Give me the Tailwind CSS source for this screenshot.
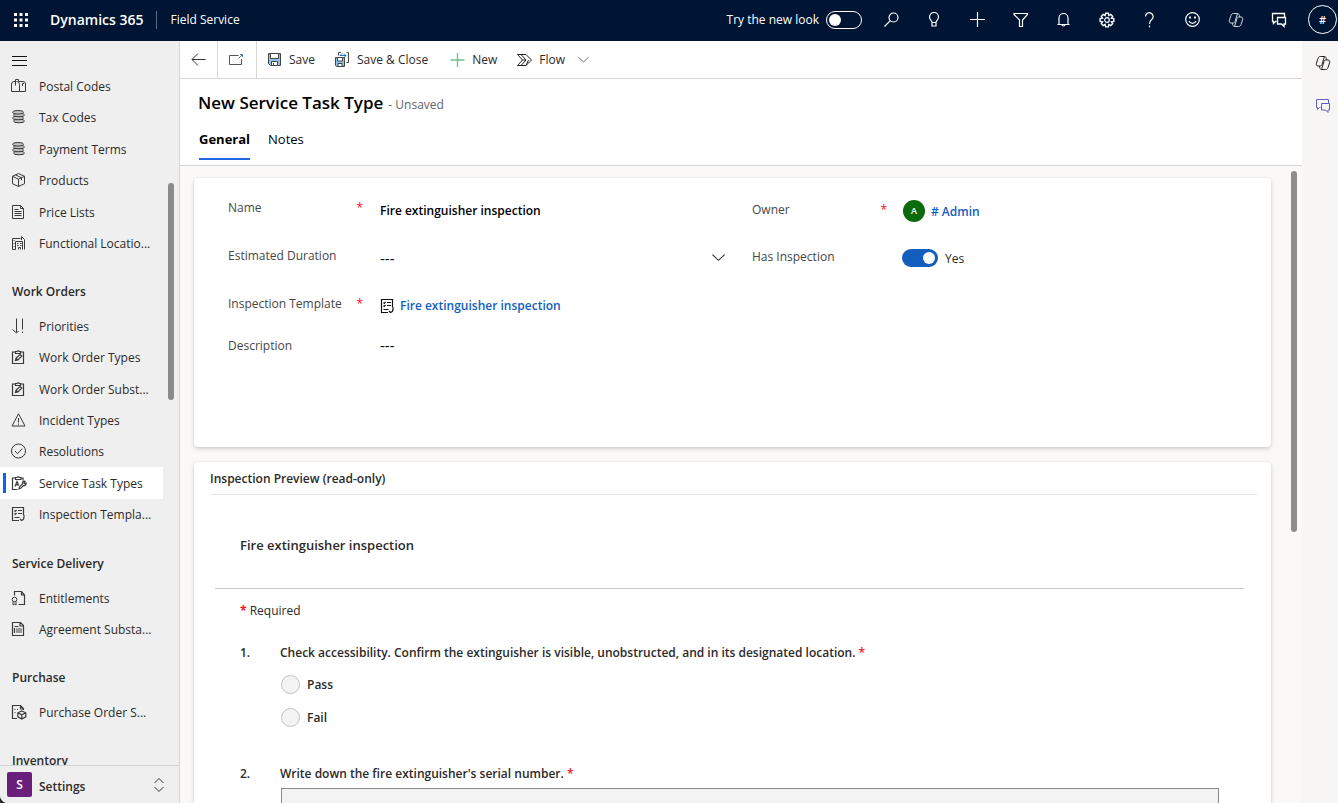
<!DOCTYPE html>
<html lang="en">
<head>
<meta charset="utf-8">
<meta name="viewport" content="width=device-width, initial-scale=1">
<title>New Service Task Type - Dynamics 365</title>
<script src="https://cdn.jsdelivr.net/npm/@tailwindcss/browser@4"></script>
</head>
<body class="bg-[#2b2b2b] font-['Open_Sans','Noto_Sans',sans-serif] text-[12px] leading-5 text-[#2b2a29]">

<svg class="hidden" aria-hidden="true">
  <symbol id="mailbox" viewBox="0 0 16 16"><path d="M8.500 13.500h-8V6A2.500 2.500 0 0 1 3 3.500h2.500M4.500 7.500v-6h3v2h4.500a2.500 2.500 0 0 1 2.500 2.500v7.500h-6V6.500A3 3 0 0 0 6 3.500M11.500 8V5.500H13"/></symbol>
  <symbol id="coins" viewBox="0 0 16 16"><g fill="#c4c4c4"><ellipse cx="8" cy="12" rx="5.500" ry="1.800"/><ellipse cx="7" cy="9" rx="5.500" ry="1.800"/><ellipse cx="8" cy="6" rx="5.500" ry="1.800"/><ellipse cx="7" cy="3.300" rx="5.500" ry="1.800"/></g></symbol>
  <symbol id="box" viewBox="0 0 16 16"><path d="M7.500 1.500 13.500 4.300v7.400L7.500 14.500 1.500 11.700V4.300zM1.500 4.300l6 2.900 6-2.900M7.500 7.200v7.300M4.500 2.900l6 2.900v2.400"/></symbol>
  <symbol id="page" viewBox="0 0 16 16"><path d="M1.500 1.500H9.500L12.500 4.500v10h-11zM9.500 1.500V4.500h3M3.500 5.500h4M3.500 7.500h7M3.500 9.500h7M3.500 11.500h7"/></symbol>
  <symbol id="buildings" viewBox="0 0 16 16"><path d="M9.500 3.500h-8v11h3M10.500 5V1.500l3 3v10M4.500 14.500v-8h7v8M2.500 5.500h1M2.500 8.500h1M2.500 11.500h1M6 8.500h1.500M9 8.500h1.500M6 10.500h1.500M9 10.500h1.500M7.500 14.500v-2h2v2"/></symbol>
  <symbol id="priority" viewBox="0 0 16 16"><path d="M5.500 .5v14M1.500 11.500l4 3.500 2-2M11.500 .5v11M11.500 13.500v1.500"/></symbol>
  <symbol id="clip" viewBox="0 0 16 16"><path stroke-width="1.200" d="M4.500 3h-3v11.500h11V3h-3M4.500 2.500H6a1.300 1.300 0 0 1 2.300 0h1.200v2h-5zM4.500 11.500l.6-2.500 4-3.500 1.800 1.500-4 4zM5 9.200l1.700 1.700"/></symbol>
  <symbol id="warn" viewBox="0 0 16 16"><path d="M7.500 1.800 14 14H1zM7.500 6v4.500M7.500 11.500v1.200"/></symbol>
  <symbol id="check" viewBox="0 0 16 16"><circle cx="7.500" cy="8" r="7"/><path d="m4 8 2.500 2.700 4.700-5"/></symbol>
  <symbol id="tasks" viewBox="0 0 16 16"><path stroke-width="1.200" d="M4.500 3h-3v11.500h5M10 3h2v2.500M4.500 2.500H6a1.500 1.500 0 0 1 2.500 0H10v2H4.500zM4 11.500l2-5 1.700 4M4.700 9.800h2.500M8 13.800l.5-2 3-3a2 2 0 0 1 2.500-2.500l-1 1.700 1 .8 1-.8a2 2 0 0 1-2.500 2.500l-2.800 2.800z"/></symbol>
  <symbol id="checklist" viewBox="0 0 16 16"><path stroke-width="1.200" d="M12.500 9V1.500h-11v13H8M3.500 4.500l.8.800L5.500 4M7 4.500h4M3.500 7.500l.8.800L5.500 7M7 7.500h4M3.500 11.500h5M9 13l1.500 1.500c2-.5 2.500-1.500 2.500-3.500V9"/></symbol>
  <symbol id="cert" viewBox="0 0 16 16"><path stroke-width="1.200" d="M3.500 5.500v-4h7L13.500 5v9.500H7.500M10.500 1.500V5H13.500"/><circle cx="3.500" cy="9.500" r="2.300"/><path d="M2 11.500v3.500l1.500-1L5 15v-3.500"/></symbol>
  <symbol id="pagefill" viewBox="0 0 16 16"><path stroke-width="1.200" d="M1.500 1.500h8L12.500 4.500v10h-11zM9 1.500V5h3.500M3.500 5.500h4M3.500 7v5"/><path fill="#999" stroke="#999" d="M5.500 7.500h5v4h-5z"/></symbol>
  <symbol id="order" viewBox="0 0 16 16"><path stroke-width="1.200" d="M6 14.500H1.500v-13h8l3 3v1.500M9.500 1.500V5h3M3.500 5.500h1M6 5.500h1M3.500 8.500h1M10.800 7l4 1.800v4L10.800 15l-4-2.200v-4zM6.800 8.800l4 2 4-2M10.800 10.800V15"/></symbol>
  <symbol id="copilot" viewBox="0 0 16 16"><path d="M5.500 1.500h4L7 9.500C6.600 10.800 6 11 5 11H3C1.300 11 1 9.500 1.400 8.200L3 3.500C3.400 2.200 4 1.500 5.500 1.500zM10.500 14.500h-4L9 6.500C9.400 5.200 10 5 11 5h2c1.700 0 2 1.500 1.600 2.800L13 12.500c-.4 1.300-1 2-2.500 2zM9.500 1.500c1.300 0 1.500 1 2.300 3.500M6.500 14.500c-1.300 0-1.500-1-2.300-3.500"/></symbol>
  <symbol id="chat" viewBox="0 0 16 16"><path d="M5.500 9.500H4.500L2.500 11.500V9.500H1.500v-8h12v4M6.500 5.500h8v6.500h-1.500v2.500l-2.500-2.500H6.500z"/></symbol>
  <symbol id="floppy" viewBox="0 0 16 16"><path fill="#8fc0ea" d="M1.500 1.500h12v12h-10l-2-2z"/><path fill="#fff" d="M3.500 1.500h8v5h-8z"/><path fill="#fff" d="M4.500 9.500h6v4h-6z"/><path d="M6.500 11v2.500"/></symbol>
  <symbol id="chev" viewBox="0 0 16 16"><path d="m1.500 5 6.500 6 6.500-6"/></symbol>
</svg>

<div class="flex h-screen flex-col overflow-hidden rounded-bl-lg bg-white">
  <header class="flex h-[41px] shrink-0 items-center bg-[#001433] pb-0.5 text-white">
    <button class="ml-[13px] grid size-4 place-items-center" aria-label="App launcher">
      <svg class="size-4" viewBox="0 0 16 16" fill="#fff"><path d="M1 1h3v3H1zM6.500 1h3v3h-3zM12 1h3v3h-3zM1 6.500h3v3H1zM6.500 6.500h3v3h-3zM12 6.500h3v3h-3zM1 12h3v3H1zM6.500 12h3v3h-3zM12 12h3v3h-3z"/></svg>
    </button>
    <a href="#" class="ml-[21px] text-[14px] font-semibold">Dynamics 365</a>
    <span class="mx-[13px] h-[18px] w-px bg-[#5a6880]"></span>
    <a href="#">Field Service</a>
    <div class="ml-auto flex items-center">
      <label for="look">Try the new look</label>
      <input id="look" type="checkbox" role="switch" class="ml-[7px] flex h-[18px] w-9 appearance-none items-center rounded-full border border-white px-0.5 before:size-3 before:rounded-full before:bg-white">
    </div>
    <nav class="ml-[22px] flex items-center gap-[27px]" aria-label="Tools">
      <button aria-label="Search"><svg class="size-4" viewBox="0 0 16 16" fill="none" stroke="#fff" stroke-width="1.200"><circle cx="9.500" cy="5.500" r="4.500"/><path d="M6.300 8.700.5 14.500"/></svg></button>
      <button aria-label="Ideas"><svg class="size-4" viewBox="0 0 16 16" fill="none" stroke="#fff" stroke-width="1.200"><path d="M5 10.500C5 8.500 2.500 8 2.500 5a4.500 4.500 0 0 1 9 0c0 3-2.500 3.500-2.500 5.500zM5 10.500V14h4v-3.500"/></svg></button>
      <button aria-label="Add"><svg class="size-4" viewBox="0 0 16 16" fill="none" stroke="#fff" stroke-width="1.200"><path d="M7.500 0v15M0 7.500h15"/></svg></button>
      <button aria-label="Filter"><svg class="size-4" viewBox="0 0 16 16" fill="none" stroke="#fff" stroke-width="1.200"><path d="M1 1.500h13.500v1L9.500 8v6.500h-3V8L1 2.500z"/></svg></button>
      <button aria-label="Notifications"><svg class="size-4" viewBox="0 0 16 16" fill="none" stroke="#fff" stroke-width="1.200"><path d="M1.500 12.500h12M3 12.500V6a4.500 4.500 0 0 1 9 0v6.500M6 12.500a1.500 1.500 0 0 0 3 0"/></svg></button>
      <button aria-label="Settings"><svg class="size-4" viewBox="0 0 16 16" fill="none" stroke="#fff" stroke-width="1.200"><path d="M6.800 1.200h2.400l.4 2 1.700-1.100 1.700 1.700-1.100 1.700 2.100.4v2.400l-2.100.4 1.100 1.700-1.700 1.700-1.700-1.100-.4 2.100H6.800l-.4-2.100-1.700 1.100L3 10.400l1.100-1.700-2.100-.4V5.900l2.100-.4L3 3.800l1.700-1.700 1.700 1.100z" transform="translate(-1.140 -.1) scale(1.140)"/><circle cx="8" cy="8" r="2.300"/></svg></button>
      <button aria-label="Help"><svg class="size-4" viewBox="0 0 16 16" fill="none" stroke="#fff" stroke-width="1.200"><path d="M3.500 4.500a3.800 3.800 0 1 1 6.200 3C8 8.800 7.500 9.500 7.500 12M7.500 13.500v1.700"/></svg></button>
      <button aria-label="Feedback"><svg class="size-4" viewBox="0 0 16 16" fill="none" stroke="#fff" stroke-width="1.200"><circle cx="7.500" cy="7.500" r="6.800"/><path d="M4 9a3.800 3.800 0 0 0 7 0"/><path stroke-width="1.800" d="M5 4.500v2M10 4.500v2"/></svg></button>
      <button aria-label="Copilot"><svg class="size-4" fill="none" stroke="#cfd5df"><use href="#copilot"/></svg></button>
      <button aria-label="Chat"><svg class="size-4" fill="none" stroke="#fff" stroke-width="1.300"><use href="#chat"/></svg></button>
    </nav>
    <button class="mr-px ml-[21px] size-[29px] shrink-0 rounded-full border border-white text-[11px] leading-none font-semibold" aria-label="Account">#</button>
  </header>

  <div class="flex min-h-0 flex-1">
    <aside class="relative flex w-[180px] shrink-0 flex-col border-r border-[#d6d6d6] bg-[#efefef]">
      <button class="ml-3 h-[29px] w-4 shrink-0 pt-[9px]" aria-label="Collapse menu"><svg class="size-4" viewBox="0 0 16 16" stroke="#111"><path d="M0 4.500h15M0 8.500h15M0 13.500h15"/></svg></button>
      <nav class="min-h-0 flex-1 overflow-hidden" aria-label="Site map">
        <ul class="grid h-[189px] w-[163px] grid-rows-6 [&_a]:flex [&_a]:h-full [&_a]:items-center [&_a]:gap-3 [&_a]:pt-0.5 [&_a]:pl-[11px] [&_svg]:-mt-0.5 [&_svg]:size-4 [&_svg]:shrink-0 [&_svg]:fill-none [&_svg]:stroke-[#3a3a3a]">
          <li><a href="#"><svg><use href="#mailbox"/></svg>Postal Codes</a></li>
          <li><a href="#"><svg><use href="#coins"/></svg>Tax Codes</a></li>
          <li><a href="#"><svg><use href="#coins"/></svg>Payment Terms</a></li>
          <li><a href="#"><svg><use href="#box"/></svg>Products</a></li>
          <li><a href="#"><svg><use href="#page"/></svg>Price Lists</a></li>
          <li><a href="#"><svg><use href="#buildings"/></svg>Functional Locatio...</a></li>
        </ul>
        <h2 class="h-[51px] pt-[23px] pl-3 font-semibold">Work Orders</h2>
        <ul class="grid h-[220px] w-[163px] grid-rows-7 [&_a]:flex [&_a]:h-full [&_a]:items-center [&_a]:gap-3 [&_a]:pt-0.5 [&_a]:pl-[11px] [&_svg]:-mt-0.5 [&_svg]:size-4 [&_svg]:shrink-0 [&_svg]:fill-none [&_svg]:stroke-[#3a3a3a]">
          <li><a href="#"><svg><use href="#priority"/></svg>Priorities</a></li>
          <li><a href="#"><svg><use href="#clip"/></svg>Work Order Types</a></li>
          <li><a href="#"><svg><use href="#clip"/></svg>Work Order Subst...</a></li>
          <li><a href="#"><svg><use href="#warn"/></svg>Incident Types</a></li>
          <li><a href="#"><svg><use href="#check"/></svg>Resolutions</a></li>
          <li class="relative bg-white before:absolute before:top-[6px] before:left-[3px] before:h-5 before:w-[3px] before:bg-[#0b62f5]"><a href="#" aria-current="page"><svg><use href="#tasks"/></svg>Service Task Types</a></li>
          <li><a href="#"><svg><use href="#checklist"/></svg>Inspection Templa...</a></li>
        </ul>
        <h2 class="h-[52px] pt-6 pl-3 font-semibold">Service Delivery</h2>
        <ul class="grid h-[63px] w-[163px] grid-rows-2 [&_a]:flex [&_a]:h-full [&_a]:items-center [&_a]:gap-3 [&_a]:pt-0.5 [&_a]:pl-[11px] [&_svg]:-mt-0.5 [&_svg]:size-4 [&_svg]:shrink-0 [&_svg]:fill-none [&_svg]:stroke-[#3a3a3a]">
          <li><a href="#"><svg><use href="#cert"/></svg>Entitlements</a></li>
          <li><a href="#"><svg><use href="#pagefill"/></svg>Agreement Substa...</a></li>
        </ul>
        <h2 class="h-[51px] pt-[23px] pl-3 font-semibold">Purchase</h2>
        <ul class="grid h-8 w-[163px] [&_a]:flex [&_a]:h-full [&_a]:items-center [&_a]:gap-3 [&_a]:pt-0.5 [&_a]:pl-[11px] [&_svg]:-mt-0.5 [&_svg]:size-4 [&_svg]:shrink-0 [&_svg]:fill-none [&_svg]:stroke-[#3a3a3a]">
          <li><a href="#"><svg><use href="#order"/></svg>Purchase Order S...</a></li>
        </ul>
        <h2 class="h-[51px] pt-[23px] pl-3 font-semibold">Inventory</h2>
      </nav>
      <span class="absolute top-[142px] right-[5px] h-[217px] w-1.5 rounded-full bg-[#8a8a8a]"></span>
      <button class="flex h-[38px] shrink-0 items-center border-t border-[#d2d2d2] pr-[14px] pl-[7px] font-semibold">
        <span class="grid size-[25px] place-items-center rounded-xs bg-[#6b1f7c] text-white">S</span>
        <span class="ml-[7px] pt-1">Settings</span>
        <svg class="ml-auto h-4 w-3" viewBox="0 0 12 16" fill="none" stroke="#333"><path d="m1.500 6 4.500-4.500L10.500 6M1.500 10 6 14.500 10.500 10"/></svg>
      </button>
    </aside>

    <main class="flex min-w-0 flex-1 flex-col">
      <div class="flex h-[38px] shrink-0 items-stretch border-b border-[#d6d6d6]" role="toolbar">
        <button class="grid w-[38px] place-items-center border-r border-[#d6d6d6]" aria-label="Back"><svg class="size-4" viewBox="0 0 16 16" fill="none" stroke="#333"><path d="M14.500 7.500H1M7 1.500l-6 6 6 6"/></svg></button>
        <button class="grid w-[39px] place-items-center border-r border-[#d6d6d6]" aria-label="Open in new window"><svg class="size-4" viewBox="0 0 16 16" fill="none" stroke="#555"><path d="M9.500 3.500h-9v9h12V7"/><path stroke="#4a6fa5" d="m9.500 6.500 4-4M11 2.500h2.500V5"/></svg></button>
        <button class="ml-2.5 flex items-center gap-1.5"><svg class="size-4" fill="none" stroke="#444"><use href="#floppy"/></svg>Save</button>
        <button class="ml-5 flex items-center gap-1.5"><svg class="size-4" viewBox="0 0 16 16" fill="none" stroke="#444"><path fill="#8fc0ea" d="M.5 5.500h9v9h-8l-1-1z"/><path fill="#fff" d="M2.500 5.500h5V9h-5zM3 11.500h4v3H3z"/><path d="M3.500 3.500v-3H6M11.500 .5h2v10h-2"/><path stroke="#1e74c8" d="M5 3.500h6M9 1.500l2 2-2 2M7 1.500l-2 2"/></svg>Save &amp; Close</button>
        <button class="ml-[22px] flex items-center gap-1.5"><svg class="size-4" viewBox="0 0 16 16" stroke="#6cc08a" stroke-width="1.300"><path d="M7.500 1v14M.5 8h14"/></svg>New</button>
        <button class="ml-5 flex items-center gap-1.5"><svg class="size-4" viewBox="0 0 16 16" fill="none" stroke="#222"><path d="M.5 2.500H9L14.500 8 9 13.500H.5L5.500 8zM5.500 8h3M4 2.500 9 8 4 13.500M9 13.500 11.500 8"/></svg>Flow<svg class="ml-1.5 size-[13px]" fill="none" stroke="#555"><use href="#chev"/></svg></button>
      </div>

      <div class="flex h-[87px] shrink-0 flex-col border-b border-[#d6d6d6] pl-[18px]">
        <div class="flex items-baseline gap-[5px] pt-3">
          <h1 class="text-[17px] leading-6 font-semibold text-black">New Service Task Type</h1>
          <span class="text-[#666]">- Unsaved</span>
        </div>
        <div class="mt-[13px] flex gap-[18px] text-[13px] text-black" role="tablist">
          <button role="tab" aria-selected="true" class="ml-px h-8 border-b-2 border-[#2266e3] pb-[9px] font-bold">General</button>
          <button role="tab" aria-selected="false" class="h-8 border-b-2 border-transparent pb-[9px]">Notes</button>
        </div>
      </div>

      <div class="relative min-h-0 flex-1 overflow-hidden bg-[#faf9f8] pt-3 pr-[31px] pl-[14px]">
        <form class="grid min-h-[269px] grid-cols-2 content-start gap-x-5 rounded-sm bg-white pt-[9px] pr-[15px] pl-[34px] shadow-[0_2px_4px_rgba(0,0,0,0.15),0_0_2px_rgba(0,0,0,0.1)]">
          <div>
            <div class="flex h-12">
              <label for="name" class="flex w-[152px] shrink-0 justify-between pt-[11px] pr-[17px] text-[#484644]">Name<span class="text-[#f01020]">*</span></label>
              <input id="name" class="mt-[14px] h-5 min-w-0 flex-1 font-semibold text-black" value="Fire extinguisher inspection">
            </div>
            <div class="flex h-12">
              <label for="duration" class="w-[152px] shrink-0 pt-[11px] text-[#484644]">Estimated Duration</label>
              <input id="duration" role="combobox" aria-expanded="false" class="mt-[13px] h-5 min-w-0 flex-1 text-[15px] text-black" value="---">
              <button type="button" class="mr-[6px] h-11" aria-label="Show durations"><svg class="size-[15px]" fill="none" stroke="#333" stroke-width="1.200"><use href="#chev"/></svg></button>
            </div>
            <div class="flex h-[42px]">
              <span class="flex w-[152px] shrink-0 justify-between pt-[11px] pr-[17px] text-[#484644]">Inspection Template<span class="text-[#f01020]">*</span></span>
              <a href="#" class="mt-[13px] flex h-5 items-center gap-1 font-semibold text-[#115ebd]"><svg class="size-4" fill="none" stroke="#111"><use href="#checklist"/></svg>Fire extinguisher inspection</a>
            </div>
            <div class="flex h-[42px]">
              <label for="desc" class="w-[152px] shrink-0 pt-[11px] text-[#484644]">Description</label>
              <input id="desc" class="mt-[10px] h-5 min-w-0 flex-1 text-[15px] text-black" value="---">
            </div>
          </div>
          <div>
            <div class="flex h-12">
              <span class="flex w-[151px] shrink-0 justify-between pt-[13px] pr-4 text-[#484644]">Owner<span class="text-[#f01020]">*</span></span>
              <a href="#" class="mt-[13px] flex h-[22px] items-center gap-1.5 font-semibold text-[#115ebd]"><span class="grid size-[22px] place-items-center rounded-full bg-[#0b6a0b] text-[9px] text-white">A</span><span class="pt-px"># Admin</span></a>
            </div>
            <div class="flex h-12">
              <label for="inspect" class="w-[150px] shrink-0 pt-3 text-[#484644]">Has Inspection</label>
              <input id="inspect" type="checkbox" role="switch" checked class="mt-[14px] flex h-[18px] w-9 appearance-none items-center justify-end rounded-full bg-[#115ebd] px-[3px] before:size-3 before:rounded-full before:bg-white">
              <span class="mt-[14px] ml-[7px]">Yes</span>
            </div>
          </div>
        </form>

        <section class="mt-[15px] rounded-t-sm bg-white pr-[14px] pb-10 pl-4 shadow-[0_2px_4px_rgba(0,0,0,0.15),0_0_2px_rgba(0,0,0,0.1)]">
          <h2 class="h-[33px] border-b border-[#e6e6e6] pt-[7px] font-semibold">Inspection Preview (read-only)</h2>
          <div class="mr-[13px] ml-[5px] border-b border-[#c8c8c8] pt-10 pb-[33px] pl-[25px]">
            <h3 class="text-[13px] font-semibold">Fire extinguisher inspection</h3>
          </div>
          <div class="pl-[30px]">
            <p class="pt-3"><span class="font-bold text-[#f01020]">*</span> Required</p>
            <ol class="mt-[22px] font-semibold">
              <li class="flex h-[121px]">
                <span class="w-10 shrink-0">1.</span>
                <fieldset>
                  <legend>Check accessibility. Confirm the extinguisher is visible, unobstructed, and in its designated location. <span class="text-[#f01020]">*</span></legend>
                  <label class="mt-[11px] flex h-5 items-center gap-[7px] pl-px"><input type="radio" name="q1" disabled class="size-[19px] appearance-none rounded-full border border-[#c2c2c2] bg-[#f3f3f3]"><span class="pt-0.5">Pass</span></label>
                  <label class="mt-[13px] flex h-5 items-center gap-[7px] pl-px"><input type="radio" name="q1" disabled class="size-[19px] appearance-none rounded-full border border-[#c2c2c2] bg-[#f3f3f3]"><span class="pt-0.5">Fail</span></label>
                </fieldset>
              </li>
              <li class="flex">
                <span class="w-10 shrink-0">2.</span>
                <div class="min-w-0 flex-1 pr-[39px]">
                  <label for="serial" class="block">Write down the fire extinguisher's serial number. <span class="text-[#f01020]">*</span></label>
                  <input id="serial" readonly class="mt-1 ml-px block h-8 w-full border border-[#8a8a8a] bg-[#f3f3f3]">
                </div>
              </li>
            </ol>
          </div>
        </section>
        <span class="absolute top-[5px] right-[5px] h-[361px] w-1.5 rounded-full bg-[#8e8e8c]"></span>
      </div>
    </main>

    <aside class="flex w-9 shrink-0 flex-col items-center gap-[27px] bg-[#f7f6f5] pt-[14px] pl-1.5" aria-label="Side pane">
      <button aria-label="Copilot"><svg class="size-4" fill="none" stroke="#222"><use href="#copilot"/></svg></button>
      <button aria-label="Conversations"><svg class="size-4" fill="none" stroke="#5b5fc7"><use href="#chat"/></svg></button>
    </aside>
  </div>
</div>
</body>
</html>
